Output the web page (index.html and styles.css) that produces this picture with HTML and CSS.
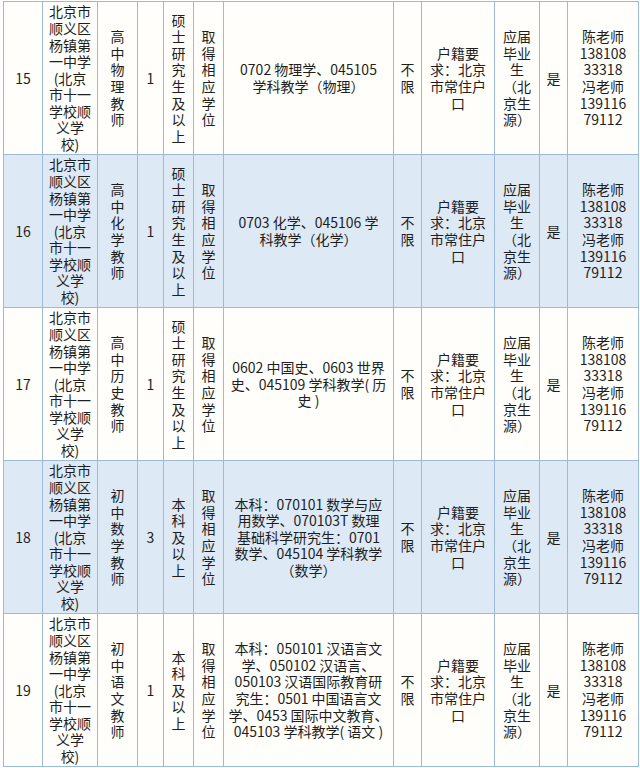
FILE: index.html
```html
<!DOCTYPE html>
<html lang="zh-CN">
<head>
<meta charset="utf-8">
<title>招聘岗位表</title>
<link rel="stylesheet" href="styles.css">
</head>
<body>
<table class="jobs">
  <colgroup>
    <col class="c-no"><col class="c-school"><col class="c-post"><col class="c-num"><col class="c-edu"><col class="c-deg"><col class="c-major"><col class="c-age"><col class="c-huji"><col class="c-src"><col class="c-yes"><col class="c-contact">
  </colgroup>
  <tbody>
    <tr class="odd">
      <td>15</td>
      <td>北京市<br>顺义区<br>杨镇第<br>一中学<br>(北京<br>市十一<br>学校顺<br>义学<br>校)</td>
      <td>高<br>中<br>物<br>理<br>教<br>师</td>
      <td>1</td>
      <td>硕<br>士<br>研<br>究<br>生<br>及<br>以<br>上</td>
      <td>取<br>得<br>相<br>应<br>学<br>位</td>
      <td>0702 物理学、045105<br>学科教学（物理）</td>
      <td>不<br>限</td>
      <td>户籍要<br>求：北京<br>市常住户<br>口</td>
      <td>应届<br>毕业<br>生<br>（北<br>京生<br>源）</td>
      <td>是</td>
      <td>陈老师<br>138108<br>33318<br>冯老师<br>139116<br>79112</td>
    </tr>
    <tr class="even">
      <td>16</td>
      <td>北京市<br>顺义区<br>杨镇第<br>一中学<br>(北京<br>市十一<br>学校顺<br>义学<br>校)</td>
      <td>高<br>中<br>化<br>学<br>教<br>师</td>
      <td>1</td>
      <td>硕<br>士<br>研<br>究<br>生<br>及<br>以<br>上</td>
      <td>取<br>得<br>相<br>应<br>学<br>位</td>
      <td>0703 化学、045106 学<br>科教学（化学）</td>
      <td>不<br>限</td>
      <td>户籍要<br>求：北京<br>市常住户<br>口</td>
      <td>应届<br>毕业<br>生<br>（北<br>京生<br>源）</td>
      <td>是</td>
      <td>陈老师<br>138108<br>33318<br>冯老师<br>139116<br>79112</td>
    </tr>
    <tr class="odd">
      <td>17</td>
      <td>北京市<br>顺义区<br>杨镇第<br>一中学<br>(北京<br>市十一<br>学校顺<br>义学<br>校)</td>
      <td>高<br>中<br>历<br>史<br>教<br>师</td>
      <td>1</td>
      <td>硕<br>士<br>研<br>究<br>生<br>及<br>以<br>上</td>
      <td>取<br>得<br>相<br>应<br>学<br>位</td>
      <td>0602 中国史、0603 世界<br>史、045109 学科教学( 历<br>史 )</td>
      <td>不<br>限</td>
      <td>户籍要<br>求：北京<br>市常住户<br>口</td>
      <td>应届<br>毕业<br>生<br>（北<br>京生<br>源）</td>
      <td>是</td>
      <td>陈老师<br>138108<br>33318<br>冯老师<br>139116<br>79112</td>
    </tr>
    <tr class="even">
      <td>18</td>
      <td>北京市<br>顺义区<br>杨镇第<br>一中学<br>(北京<br>市十一<br>学校顺<br>义学<br>校)</td>
      <td>初<br>中<br>数<br>学<br>教<br>师</td>
      <td>3</td>
      <td>本<br>科<br>及<br>以<br>上</td>
      <td>取<br>得<br>相<br>应<br>学<br>位</td>
      <td>本科：070101 数学与应<br>用数学、070103T 数理<br>基础科学研究生：0701<br>数学、045104 学科教学<br>（数学）</td>
      <td>不<br>限</td>
      <td>户籍要<br>求：北京<br>市常住户<br>口</td>
      <td>应届<br>毕业<br>生<br>（北<br>京生<br>源）</td>
      <td>是</td>
      <td>陈老师<br>138108<br>33318<br>冯老师<br>139116<br>79112</td>
    </tr>
    <tr class="odd">
      <td>19</td>
      <td>北京市<br>顺义区<br>杨镇第<br>一中学<br>(北京<br>市十一<br>学校顺<br>义学<br>校)</td>
      <td>初<br>中<br>语<br>文<br>教<br>师</td>
      <td>1</td>
      <td>本<br>科<br>及<br>以<br>上</td>
      <td>取<br>得<br>相<br>应<br>学<br>位</td>
      <td>本科：050101 汉语言文<br>学、050102 汉语言、<br>050103 汉语国际教育研<br>究生：0501 中国语言文<br>学、0453 国际中文教育、<br>045103 学科教学( 语文 )</td>
      <td>不<br>限</td>
      <td>户籍要<br>求：北京<br>市常住户<br>口</td>
      <td>应届<br>毕业<br>生<br>（北<br>京生<br>源）</td>
      <td>是</td>
      <td>陈老师<br>138108<br>33318<br>冯老师<br>139116<br>79112</td>
    </tr>
  </tbody>
</table>
</body>
</html>
```

FILE: styles.css
```css
html, body {
  margin: 0;
  padding: 0;
  background: #ffffff;
}

body {
  padding: 1px 0 0 3px;
  font-family: "Noto Sans CJK SC", "Noto Sans", sans-serif;
  font-size: 14px;
  line-height: 16.6px;
  color: #1e1e1e;
}

.jobs {
  border-collapse: collapse;
  table-layout: fixed;
  width: 636px;
}

.jobs td {
  border: 1px solid #9cb9d6;
  padding: 0;
  height: 152px;
  text-align: center;
  vertical-align: middle;
  white-space: nowrap;
  overflow: hidden;
}

.odd td { background: #fffefa; }
.even td { background: #dee9f6; }

.c-no { width: 39px; }
.c-school { width: 55px; }
.c-post { width: 40px; }
.c-num { width: 26px; }
.c-edu { width: 30px; }
.c-deg { width: 30px; }
.c-major { width: 170px; }
.c-age { width: 28px; }
.c-huji { width: 73px; }
.c-src { width: 45px; }
.c-yes { width: 28px; }
.c-contact { width: 71px; }
```
